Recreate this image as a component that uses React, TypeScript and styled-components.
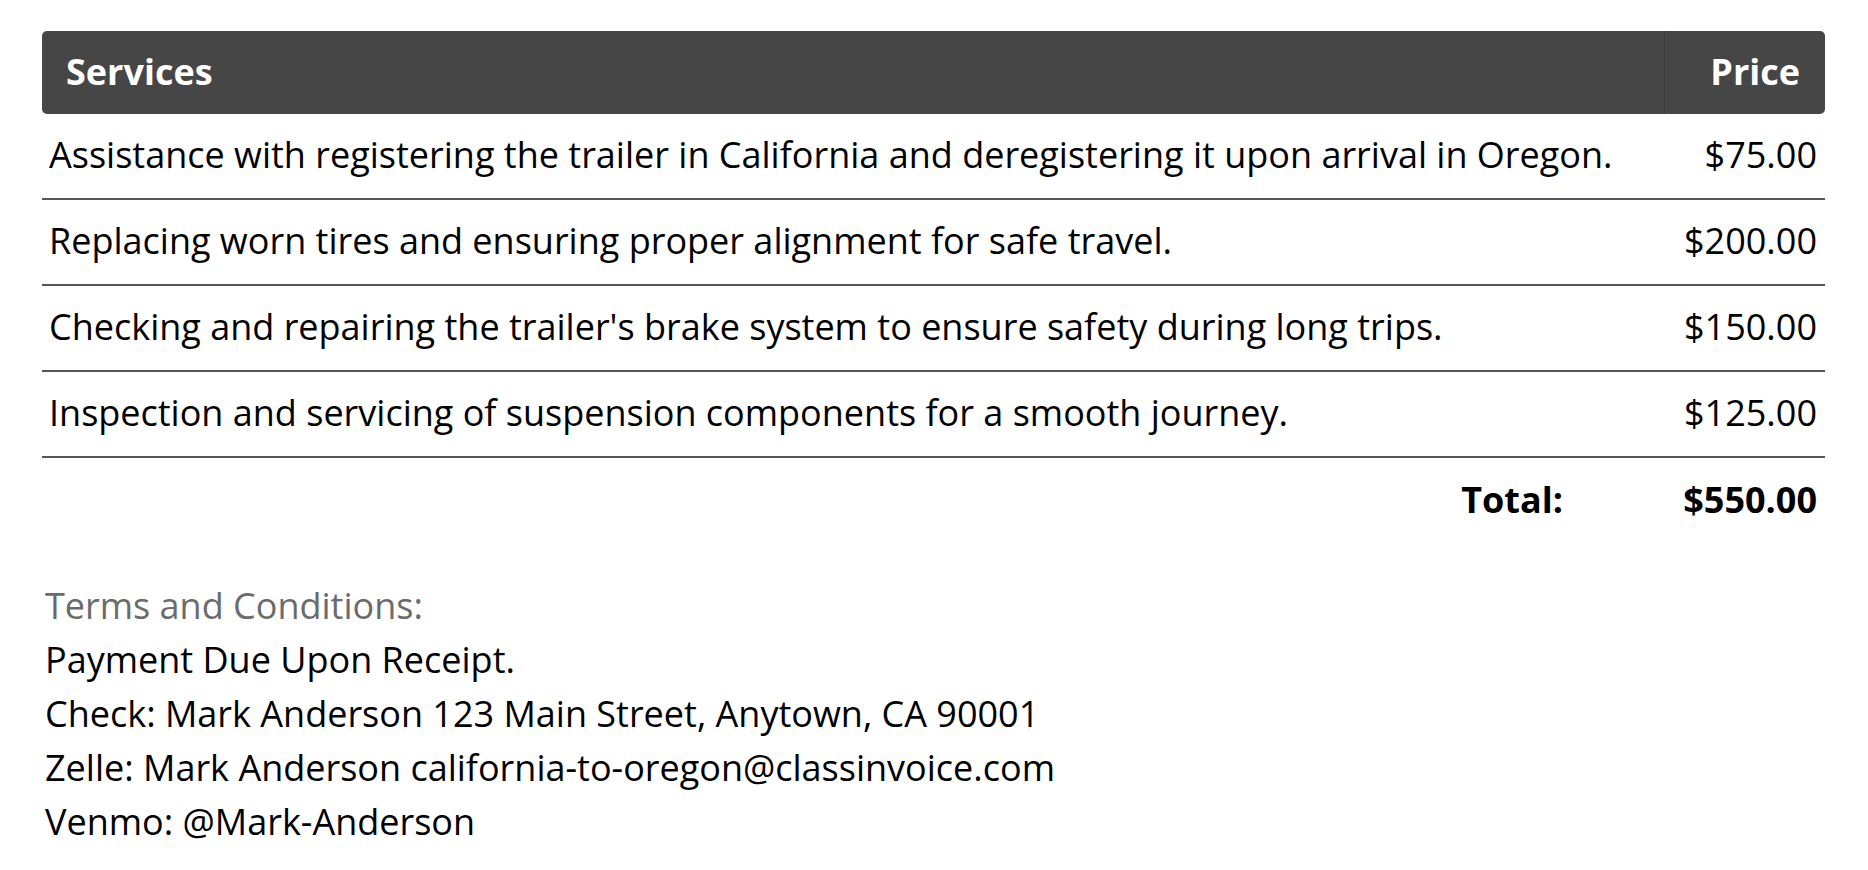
import styled, { createGlobalStyle } from 'styled-components';

const GlobalStyle = createGlobalStyle`
  body {
    margin: 0;
    background: #ffffff;
    font-family: 'Open Sans', 'Lato', sans-serif;
    color: #000000;
  }
`;

const Page = styled.div`
  padding: 31px 43px 0 42px;
`;

const Table = styled.div`
  display: grid;
  grid-template-columns: 1fr 161px;
`;

const HeaderCell = styled.div<{ $align?: 'left' | 'right' }>`
  height: 83px;
  display: flex;
  align-items: center;
  justify-content: ${(p) => (p.$align === 'right' ? 'flex-end' : 'flex-start')};
  padding: 0 25px 2px 24px;
  box-sizing: border-box;
  background: #464646;
  color: #ffffff;
  font-size: 36px;
  font-weight: 700;
  border-radius: ${(p) => (p.$align === 'right' ? '0 5px 5px 0' : '5px 0 0 5px')};
  border-left: ${(p) => (p.$align === 'right' ? '1px solid #3c3c3c' : 'none')};
`;

const Cell = styled.div<{ $align?: 'left' | 'right' }>`
  height: 86px;
  box-sizing: border-box;
  display: flex;
  align-items: center;
  justify-content: ${(p) => (p.$align === 'right' ? 'flex-end' : 'flex-start')};
  padding: 0 8px 3px 7px;
  font-size: 36px;
  font-weight: 500;
  white-space: nowrap;
  border-bottom: 2px solid #555555;
`;

const TotalRow = styled.div`
  display: flex;
  justify-content: flex-end;
  align-items: center;
  height: 80px;
  padding-top: 3px;
  box-sizing: border-box;
  font-size: 36px;
  font-weight: 700;
`;

const TotalLabel = styled.div`
  margin-right: 101px;
`;

const TotalValue = styled.div`
  width: 161px;
  box-sizing: border-box;
  padding-right: 8px;
  text-align: right;
`;

const Terms = styled.div`
  margin-top: 41px;
  padding-left: 3px;
  font-size: 36px;
  font-weight: 500;
  line-height: 54px;
`;

const TermsTitle = styled.div`
  color: #6b6b6b;
`;

const services = [
  {
    name: 'Assistance with registering the trailer in California and deregistering it upon arrival in Oregon.',
    price: 75,
  },
  { name: 'Replacing worn tires and ensuring proper alignment for safe travel.', price: 200 },
  {
    name: "Checking and repairing the trailer's brake system to ensure safety during long trips.",
    price: 150,
  },
  { name: 'Inspection and servicing of suspension components for a smooth journey.', price: 125 },
];

const money = (n: number) => `$${n.toFixed(2)}`;

export default function App() {
  const total = services.reduce((sum, s) => sum + s.price, 0);
  return (
    <>
      <GlobalStyle />
      <Page>
        <Table>
          <HeaderCell>Services</HeaderCell>
          <HeaderCell $align="right">Price</HeaderCell>
          {services.map((s) => (
            <>
              <Cell key={s.name}>{s.name}</Cell>
              <Cell key={s.name + '-price'} $align="right">
                {money(s.price)}
              </Cell>
            </>
          ))}
        </Table>
        <TotalRow>
          <TotalLabel>Total:</TotalLabel>
          <TotalValue>{money(total)}</TotalValue>
        </TotalRow>
        <Terms>
          <TermsTitle>Terms and Conditions:</TermsTitle>
          <div>Payment Due Upon Receipt.</div>
          <div>Check: Mark Anderson 123 Main Street, Anytown, CA 90001</div>
          <div>Zelle: Mark Anderson california-to-oregon@classinvoice.com</div>
          <div>Venmo: @Mark-Anderson</div>
        </Terms>
      </Page>
    </>
  );
}
